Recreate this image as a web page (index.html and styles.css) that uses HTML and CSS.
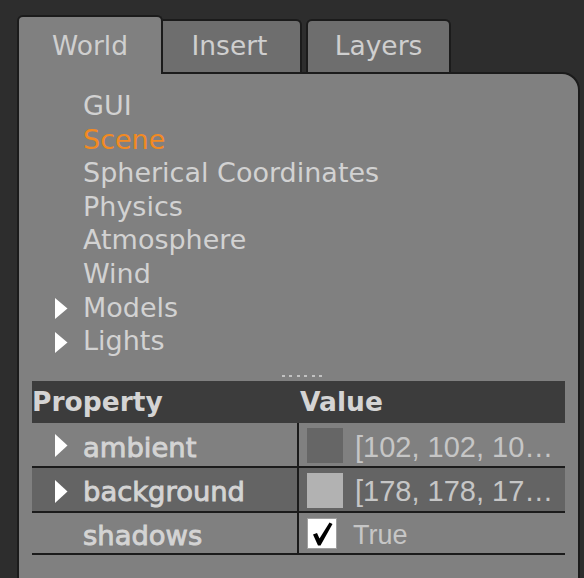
FILE: index.html
```html
<!DOCTYPE html>
<html>
<head>
<meta charset="utf-8">
<link rel="stylesheet" href="styles.css">
</head>
<body>
<div class="app">
  <div class="tabbar">
    <div class="tab tab-active">World</div>
    <div class="tab tab-insert">Insert</div>
    <div class="tab tab-layers">Layers</div>
  </div>
  <div class="panel">
    <ul class="tree">
      <li class="item">GUI</li>
      <li class="item item-selected">Scene</li>
      <li class="item">Spherical Coordinates</li>
      <li class="item">Physics</li>
      <li class="item">Atmosphere</li>
      <li class="item">Wind</li>
      <li class="item item-parent"><svg class="arrow" viewBox="0 0 14 21"><path d="M1 0 L13.5 10.5 L1 21 Z"/></svg>Models</li>
      <li class="item item-parent"><svg class="arrow" viewBox="0 0 14 21"><path d="M1 0 L13.5 10.5 L1 21 Z"/></svg>Lights</li>
    </ul>
    <div class="splitter"><span></span><span></span><span></span><span></span><span></span><span></span></div>
    <div class="props">
      <div class="prow prow-head">
        <div class="pname">Property</div>
        <div class="pvalue">Value</div>
      </div>
      <div class="prow prow-1">
        <div class="pname"><svg class="parrow" viewBox="0 0 14 23"><path d="M1 0 L13.5 11.5 L1 23 Z"/></svg><span class="ptext">ambient</span></div>
        <div class="pvalue"><span class="swatch swatch-ambient"></span><span class="vtext">[102, 102, 10…</span></div>
      </div>
      <div class="prow prow-2">
        <div class="pname"><svg class="parrow" viewBox="0 0 14 23"><path d="M1 0 L13.5 11.5 L1 23 Z"/></svg><span class="ptext">background</span></div>
        <div class="pvalue"><span class="swatch swatch-bg"></span><span class="vtext">[178, 178, 17…</span></div>
      </div>
      <div class="prow prow-3">
        <div class="pname pname-leaf"><span class="ptext">shadows</span></div>
        <div class="pvalue"><span class="check"><svg viewBox="0 0 28 29"><path d="M5 15.5 L9 14 L11.5 19.5 L21.5 3.5 L24.5 5 L12.5 26.5 L10 26.5 Z" fill="#000"/></svg></span><span class="vtext vtext-true">True</span></div>
      </div>
    </div>
  </div>
</div>
</body>
</html>
```

FILE: styles.css
```css
html, body {
  margin: 0;
  padding: 0;
  background: #2d2d2d;
  height: 100%;
  overflow: hidden;
}

.app {
  padding: 15px 4px 0 17px;
  font-family: "DejaVu Sans", sans-serif;
  font-size: 26.5px;
  color: #d2d2d2;
}

/* ---------- tabs ---------- */

.tabbar {
  display: flex;
  align-items: flex-end;
}

.tab {
  box-sizing: border-box;
  border: 2px solid #1b1b1b;
  border-bottom: none;
  border-radius: 6px 6px 0 0;
  background: #6e6e6e;
  line-height: 32px;
  padding: 9px 0 10px;
  text-align: center;
  color: #cfcfcf;
}

.tab-active {
  position: relative;
  z-index: 1;
  width: 146px;
  background: #808080;
  padding: 13px 0 12px;
  margin-bottom: -2px;
}

.tab-insert {
  width: 139px;
  border-left: none;
  border-top-left-radius: 0;
  padding-right: 4px;
}

.tab-layers {
  width: 145px;
  margin-left: 4px;
}

/* ---------- panel ---------- */

.panel {
  box-sizing: border-box;
  background: #808080;
  border: 2px solid #1b1b1b;
  border-top-right-radius: 18px;
  height: 540px;
}

/* ---------- tree ---------- */

.tree {
  list-style: none;
  margin: 0;
  padding: 15px 0 0 0;
  font-size: 27px;
}

.item {
  display: flex;
  align-items: center;
  height: 33.6px;
  line-height: 33.6px;
  padding-left: 64px;
  white-space: nowrap;
}

.item-parent {
  padding-left: 35px;
}

.item-selected {
  color: #f28a22;
}

.arrow {
  width: 14px;
  height: 21px;
  fill: #ffffff;
  flex: none;
  margin: 3px 15px 0 0;
}

/* ---------- splitter ---------- */

.splitter {
  display: flex;
  gap: 4.4px;
  padding: 17px 0 0 263px;
  height: 2px;
}

.splitter span {
  width: 3px;
  height: 2px;
  background: #c2c2c2;
}

/* ---------- property table ---------- */

.props {
  margin: 4px 13px 0;
}

.prow {
  display: grid;
  grid-template-columns: 265px 1fr;
  border-bottom: 2px solid #1b1b1b;
}

.prow-head {
  background: #3c3c3c;
  border-bottom: none;
  height: 42px;
  line-height: 42px;
  font-weight: bold;
  color: #d4d4d4;
}

.prow-head .pname {
  display: block;
  padding: 0;
}

.prow-head .pvalue {
  padding-left: 3px;
}

.prow-1 { height: 43px; }
.prow-2 { height: 43px; background: #646464; }
.prow-3 { height: 40px; }

.pname {
  display: flex;
  align-items: flex-start;
  white-space: nowrap;
  padding-left: 22px;
}

.pname-leaf {
  padding-left: 51px;
}

.parrow {
  flex: none;
  width: 14px;
  height: 23px;
  fill: #ffffff;
  margin-right: 15px;
}

.ptext {
  font-size: 27.4px;
  line-height: 32px;
  color: #d4d4d4;
  -webkit-text-stroke: 0.9px #d4d4d4;
}

.prow-1 .parrow { margin-top: 11px; }
.prow-1 .ptext { margin-top: 9px; }
.prow-2 .parrow { margin-top: 12px; }
.prow-2 .ptext { margin-top: 8px; }
.prow-3 .ptext { margin-top: 7px; }

.prow-1 .pvalue,
.prow-2 .pvalue,
.prow-3 .pvalue {
  display: flex;
  align-items: flex-start;
  border-left: 2px solid #1b1b1b;
  padding-left: 8px;
  overflow: hidden;
  white-space: nowrap;
}

.swatch {
  flex: none;
  width: 36px;
  height: 35px;
  margin-top: 5px;
}

.swatch-ambient { background: #666666; }
.swatch-bg { background: #b2b2b2; }

.vtext {
  font-family: "Liberation Sans", Arial, sans-serif;
  font-size: 29px;
  line-height: 32px;
  color: #c6c6c6;
  margin-left: 12px;
}

.prow-1 .vtext { margin-top: 8px; }
.prow-2 .vtext { margin-top: 7px; }

.vtext-true {
  font-size: 27px;
  margin: 6px 0 0 16px;
}

.check {
  flex: none;
  box-sizing: border-box;
  width: 30px;
  height: 31px;
  margin-top: 5px;
  background: #ffffff;
  border: 1px solid #a0a0a0;
  display: flex;
}

.check svg {
  width: 100%;
  height: 100%;
}
```
